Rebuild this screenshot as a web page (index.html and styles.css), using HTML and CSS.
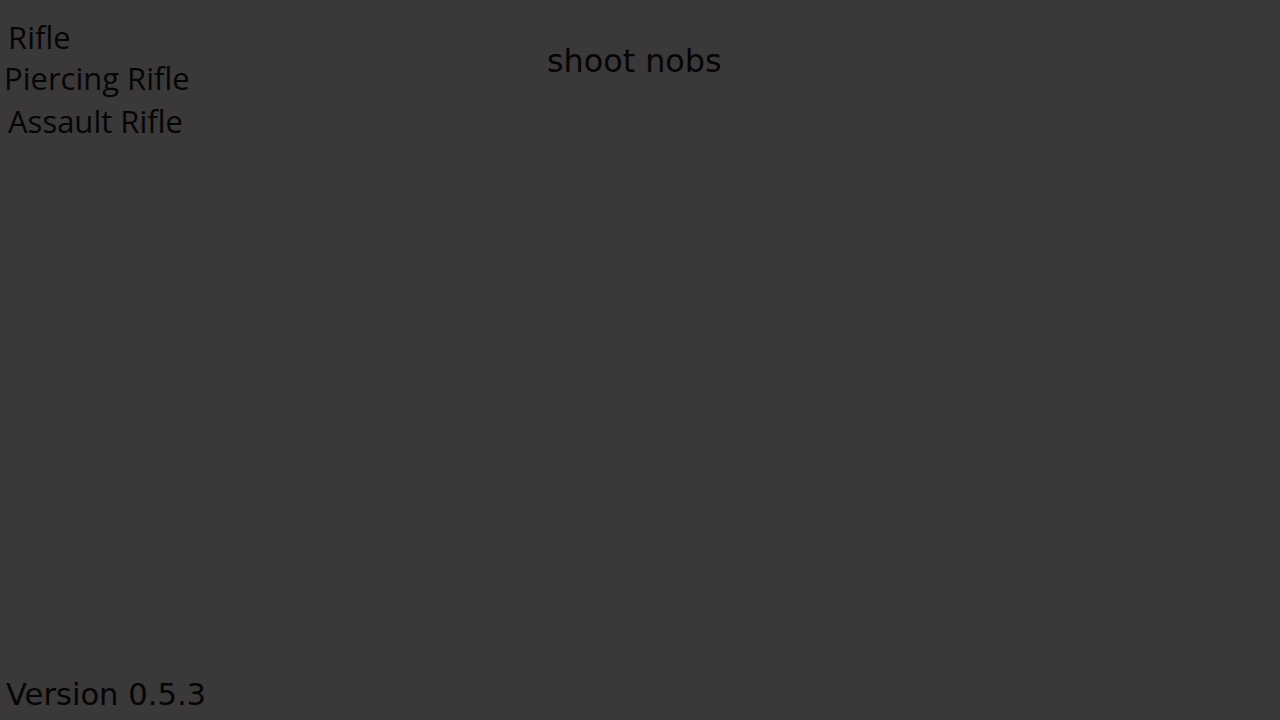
FILE: index.html
```html
<!DOCTYPE html>
<html>
<head>
<meta charset="utf-8">
<link rel="stylesheet" href="styles.css">
</head>
<body>
<div class="screen">
  <div class="top">
    <ul class="weapons">
      <li class="w w1">Rifle</li>
      <li class="w w2">Piercing Rifle</li>
      <li class="w w3">Assault Rifle</li>
    </ul>
    <div class="title">shoot nobs</div>
  </div>
  <div class="version">Version 0.5.3</div>
</div>
</body>
</html>
```
FILE: styles.css
```css
html, body {
  margin: 0;
  padding: 0;
  background: #3a3839;
}
.screen {
  width: 1280px;
  height: 720px;
  display: flex;
  flex-direction: column;
  justify-content: space-between;
  color: #050505;
  font-family: "DejaVu Sans", sans-serif;
}
.top {
  display: flex;
}
.weapons {
  list-style: none;
  margin: 0;
  padding: 0;
  width: 200px;
  font-family: "Open Sans", sans-serif;
  font-size: 31px;
}
.w {
  height: 42px;
  line-height: 42px;
}
.w1 { margin-top: 16px; padding-left: 8px; }
.w2 { padding-left: 4px; margin-top: -1px; }
.w3 { padding-left: 8px; margin-top: 1px; }
.title {
  font-size: 31.8px;
  margin-left: 347px;
  margin-top: 42px;
}
.version {
  font-size: 30.6px;
  padding-left: 6px;
  padding-bottom: 8px;
}
```
